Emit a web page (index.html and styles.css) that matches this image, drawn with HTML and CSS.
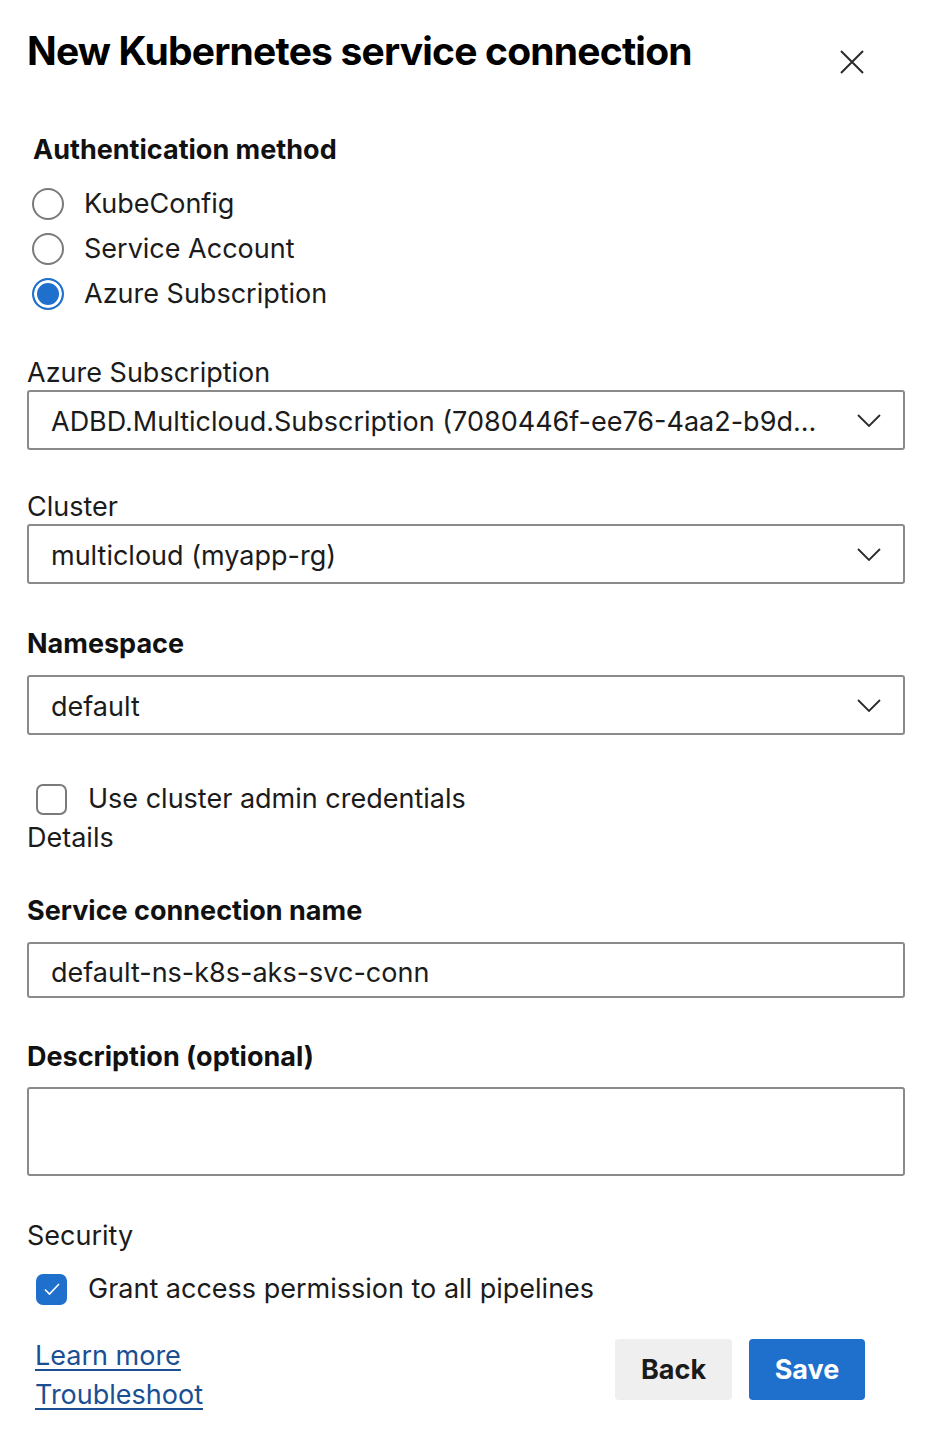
FILE: index.html
```html
<!DOCTYPE html>
<html lang="en">
<head>
<meta charset="utf-8">
<title>New Kubernetes service connection</title>
<link rel="stylesheet" href="styles.css">
</head>
<body>
<div class="panel">
  <header class="header">
    <h1 class="title">New Kubernetes service connection</h1>
    <button class="close" aria-label="Close">
      <svg width="24" height="24" viewBox="0 0 24 24"><path d="M1 1 L23 23 M23 1 L1 23" stroke="#2b2b2b" stroke-width="2" fill="none"/></svg>
    </button>
  </header>

  <section class="auth">
    <h2 class="heading auth-heading">Authentication method</h2>
    <div class="radio-group">
      <label class="radio"><span class="radio-dot"></span><span>KubeConfig</span></label>
      <label class="radio"><span class="radio-dot"></span><span>Service Account</span></label>
      <label class="radio"><span class="radio-dot checked"></span><span>Azure Subscription</span></label>
    </div>
  </section>

  <div class="field field-sub">
    <div class="label">Azure Subscription</div>
    <div class="select">
      <span class="select-text">ADBD.Multicloud.Subscription (7080446f-ee76-4aa2-b9d...</span>
      <svg class="chevron" width="24" height="13" viewBox="0 0 24 13"><path d="M1 1 L12 12 L23 1" stroke="#2b2b2b" stroke-width="1.8" fill="none"/></svg>
    </div>
  </div>

  <div class="field field-cluster">
    <div class="label">Cluster</div>
    <div class="select">
      <span class="select-text">multicloud (myapp-rg)</span>
      <svg class="chevron" width="24" height="13" viewBox="0 0 24 13"><path d="M1 1 L12 12 L23 1" stroke="#2b2b2b" stroke-width="1.8" fill="none"/></svg>
    </div>
  </div>

  <div class="field field-ns">
    <div class="heading label-bold">Namespace</div>
    <div class="select">
      <span class="select-text">default</span>
      <svg class="chevron" width="24" height="13" viewBox="0 0 24 13"><path d="M1 1 L12 12 L23 1" stroke="#2b2b2b" stroke-width="1.8" fill="none"/></svg>
    </div>
  </div>

  <label class="check check-admin"><span class="box"></span><span>Use cluster admin credentials</span></label>
  <div class="label details">Details</div>

  <div class="field field-name">
    <div class="heading label-bold">Service connection name</div>
    <div class="input">default-ns-k8s-aks-svc-conn</div>
  </div>

  <div class="field field-desc">
    <div class="heading label-bold">Description (optional)</div>
    <div class="textarea"></div>
  </div>

  <div class="label security">Security</div>
  <label class="check check-grant"><span class="box checked">
    <svg width="18" height="14" viewBox="0 0 18 14"><path d="M2 7.5 L6.5 12 L16 2" stroke="#fff" stroke-width="1.6" fill="none"/></svg>
  </span><span>Grant access permission to all pipelines</span></label>

  <footer class="footer">
    <div class="links">
      <a href="#" class="link">Learn more</a>
      <a href="#" class="link">Troubleshoot</a>
    </div>
    <div class="buttons">
      <button class="btn btn-back">Back</button>
      <button class="btn btn-save">Save</button>
    </div>
  </footer>
</div>
</body>
</html>
```

FILE: styles.css
```css
* { box-sizing: border-box; }

body {
  margin: 0;
  background: #ffffff;
  font-family: Inter, "Noto Sans", "Liberation Sans", sans-serif;
  color: #1b1b1b;
  font-size: 27px;
  line-height: 32px;
}

.panel {
  width: 936px;
  padding: 27px 31px 0 27px;
}

.header {
  display: flex;
  justify-content: space-between;
  align-items: flex-start;
  padding-right: 41px;
}

.title {
  margin: 0;
  font-size: 39px;
  line-height: 48px;
  font-weight: 700;
  letter-spacing: -0.8px;
  color: #000;
}

.close {
  border: 0;
  background: none;
  padding: 0;
  margin-top: 23px;
  width: 24px;
  height: 24px;
  display: block;
}
.close svg { display: block; }

.heading {
  margin: 0;
  font-weight: 700;
  font-size: 27px;
  line-height: 32px;
  color: #111;
}

.auth {
  margin-top: 59px;
  padding-left: 5px;
}
.auth-heading { padding-left: 1px; }

.radio-group {
  margin-top: 22px;
  display: flex;
  flex-direction: column;
  gap: 13px;
}

.radio {
  display: flex;
  align-items: center;
  gap: 20px;
  height: 32px;
}

.radio-dot {
  width: 32px;
  height: 32px;
  border-radius: 50%;
  border: 2px solid #7a7a7a;
  flex: none;
}
.radio-dot.checked {
  border-color: #1f6fcc;
  background: #1f6fcc;
  box-shadow: inset 0 0 0 3px #ffffff;
}

.label { font-size: 27px; line-height: 32px; }

.field-sub { margin-top: 47px; }
.field-cluster { margin-top: 41px; }
.field-ns { margin-top: 44px; }
.field-name { margin-top: 41px; }
.field-desc { margin-top: 43px; }

.select {
  margin-top: 1px;
  height: 60px;
  border: 2px solid #8a8a8a;
  border-radius: 3px;
  display: flex;
  align-items: center;
  justify-content: space-between;
  padding: 0 22px 0 22px;
}
.field-ns .select { margin-top: 15px; }

.select-text { white-space: nowrap; padding-top: 4px; }
.chevron { flex: none; display: block; }

.input {
  margin-top: 15px;
  height: 56px;
  border: 2px solid #8a8a8a;
  border-radius: 3px;
  display: flex;
  align-items: center;
  padding: 5px 22px 0;
}

.textarea {
  margin-top: 14px;
  height: 89px;
  border: 2px solid #8a8a8a;
  border-radius: 3px;
}

.check {
  display: flex;
  align-items: center;
  gap: 21px;
  height: 32px;
  padding-left: 9px;
}

.box {
  width: 31px;
  height: 31px;
  border: 2px solid #7a7a7a;
  border-radius: 7px;
  flex: none;
  display: flex;
  align-items: center;
  justify-content: center;
}
.box.checked {
  border: 0;
  background: #1f6fcc;
}
.box svg { display: block; }

.check-admin { margin-top: 48px; }
.details { margin-top: 7px; }

.security { margin-top: 44px; }
.check-grant { margin-top: 21px; }

.footer {
  margin-top: 31px;
  display: flex;
  justify-content: space-between;
  align-items: flex-start;
  padding-right: 40px;
}

.links {
  display: flex;
  flex-direction: column;
  padding-left: 8px;
}
.link {
  color: #1b4f93;
  text-decoration: underline;
  text-decoration-thickness: 2px;
  text-underline-offset: 4px;
  line-height: 39px;
}

.buttons {
  display: flex;
  gap: 17px;
  margin-top: 3px;
}

.btn {
  height: 61px;
  border: 0;
  border-radius: 4px;
  font-family: Inter, "Noto Sans", "Liberation Sans", sans-serif;
  font-size: 27px;
  font-weight: 700;
  padding: 0;
}
.btn-back {
  width: 117px;
  background: #efefef;
  color: #1b1b1b;
}
.btn-save {
  width: 116px;
  background: #1f6fcc;
  color: #ffffff;
}
```
